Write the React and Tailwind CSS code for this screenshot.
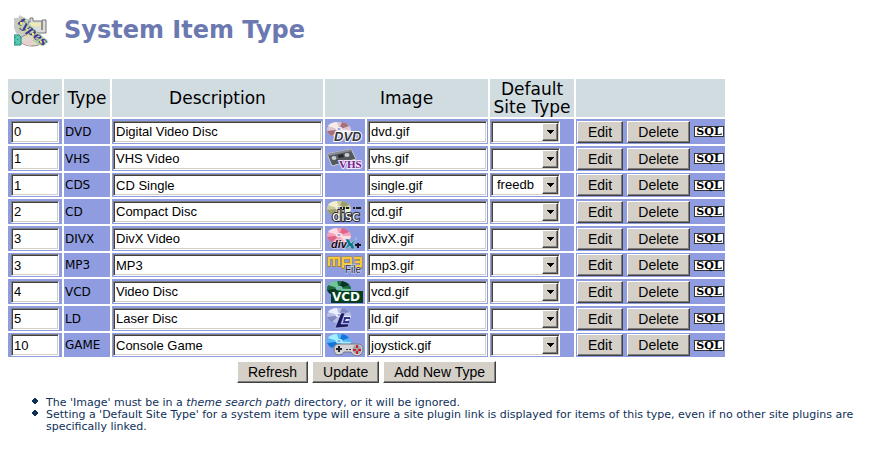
import React, { useState } from 'react';

const siteTypes = ['', 'freedb'];

const initialItems = [
  { order: '0', type: 'DVD', description: 'Digital Video Disc', image: 'dvd.gif', site: '' },
  { order: '1', type: 'VHS', description: 'VHS Video', image: 'vhs.gif', site: '' },
  { order: '1', type: 'CDS', description: 'CD Single', image: 'single.gif', site: 'freedb' },
  { order: '2', type: 'CD', description: 'Compact Disc', image: 'cd.gif', site: '' },
  { order: '3', type: 'DIVX', description: 'DivX Video', image: 'divX.gif', site: '' },
  { order: '3', type: 'MP3', description: 'MP3', image: 'mp3.gif', site: '' },
  { order: '4', type: 'VCD', description: 'Video Disc', image: 'vcd.gif', site: '' },
  { order: '5', type: 'LD', description: 'Laser Disc', image: 'ld.gif', site: '' },
  { order: '10', type: 'GAME', description: 'Console Game', image: 'joystick.gif', site: '' },
];

const Disc = ({ base, dark, light }) => (
  <g>
    <ellipse cx="13" cy="7.5" rx="12" ry="7.5" fill={base} />
    <path d="M13 7.5 L2 4 Q5 0 11 0 Z" fill={light} />
    <path d="M13 7.5 L16 0 Q21 1 23 4 Z" fill={dark} />
    <path d="M13 7.5 L1 9 Q2 12 6 14 Z" fill={dark} />
    <path d="M13 7.5 L25 8 Q24 12 19 14 Z" fill={light} />
    <ellipse cx="13" cy="7" rx="3.5" ry="2.2" fill={light} />
    <ellipse cx="13" cy="7" rx="1.5" ry="1" fill="#8f9de0" />
  </g>
);

const icons = {
  DVD: (
    <>
      <g transform="translate(0 1)">
        <Disc base="#d9c6d2" dark="#a5707a" light="#f6ecec" />
      </g>
      <text x="8" y="20" fontFamily="Liberation Sans" fontSize="13" fontWeight="bold" fontStyle="italic" fill="#34343c" stroke="#fff" strokeWidth="2" paintOrder="stroke">DVD</text>
    </>
  ),
  VHS: (
    <>
      <path d="M1 6 L25 1 L30 11 L6 18 Z" fill="#55585c" stroke="#c9ccd4" strokeWidth="1" />
      <path d="M1 6 L25 1 L26 3 L2 8 Z" fill="#898c92" />
      <ellipse cx="8" cy="10" rx="2.5" ry="2" fill="#c8cbd0" />
      <ellipse cx="21" cy="7" rx="2.5" ry="2" fill="#c8cbd0" />
      <path d="M12 7 L17 6 L18 9 L13 10 Z" fill="#25262a" />
      <text x="13" y="20" fontFamily="Liberation Serif" fontSize="11" fontWeight="bold" fill="#76228a" stroke="#f0e6fa" strokeWidth="2" paintOrder="stroke">VHS</text>
    </>
  ),
  CD: (
    <>
      <Disc base="#c9cb9f" dark="#9a9c6c" light="#f0f0d0" />
      <path d="M14 6h2v2h-2zM17 6h2v2h-2zM20 6h3v2h-3zM27 6h2v2h-2zM30 6h5v2h-5z" fill="#1d1d1d" />
      <text x="6" y="20" fontFamily="DejaVu Sans" fontSize="14" fill="#fff" stroke="#222" strokeWidth="2" paintOrder="stroke">disc</text>
    </>
  ),
  DIVX: (
    <>
      <Disc base="#f0a2b8" dark="#de6488" light="#ffdbe4" />
      <text x="5" y="20" fontFamily="Liberation Sans" fontSize="11" fontWeight="bold" fontStyle="italic" fill="#130d18" stroke="#f8dce4" strokeWidth="1" paintOrder="stroke">div</text>
      <path d="M19 11 L23 11 L25 15 L31 10 L27 16 L29 21 L25 21 L24 18 L18 22 L22 16 Z" fill="#11788c" stroke="#d4eef4" strokeWidth="0.5" />
      <path d="M31 15h2v1h2v2h-2v2h-2v-2h-2v-2h2z" fill="#14141c" />
    </>
  ),
  MP3: (
    <>
      <path d="M3 13V4h10v9M8 4v9M17 15V4h8v6h-8M28 4h7v9h-7M29 8h6" fill="none" stroke="#a9811c" strokeWidth="3" />
      <path d="M3 12V4h10v8M8 4v8M17 14V4h8v6h-8M28 4h7v8h-7M29 8h6" fill="none" stroke="#f7c936" strokeWidth="2" />
      <text x="19" y="19" fontFamily="Liberation Sans" fontSize="10" fill="#282836" stroke="#d8daf0" strokeWidth="1" paintOrder="stroke">File</text>
    </>
  ),
  VCD: (
    <>
      <Disc base="#1b6a42" dark="#0a3523" light="#72c49c" />
      <rect x="5" y="10" width="32" height="12" fill="#063c20" />
      <text x="6" y="20" fontFamily="DejaVu Sans" fontSize="12" fontWeight="bold" fill="#f2fff6">VCD</text>
    </>
  ),
  LD: (
    <>
      <Disc base="#b7bfe4" dark="#8188c0" light="#edf0ff" />
      <path d="M15 5 L19 5 L15 16 L23 16 L22 19 L9 20 Z" fill="#181a62" stroke="#e0e4fa" strokeWidth="0.5" />
      <path d="M18 9h6v2h-4l-1 2h4v2h-6z" fill="#30338a" />
    </>
  ),
  GAME: (
    <>
      <Disc base="#54b8f8" dark="#1673d8" light="#a4f0ff" />
      <path d="M13 10 Q8 10 8 15 Q8 21 13 21 Q17 21 18 18 L25 18 Q27 22 31 22 Q37 21 37 15 Q37 10 31 10 Z" fill="#d4d4d6" stroke="#727482" strokeWidth="1" />
      <path d="M12 12h2v2h2v2h-2v2h-2v-2h-2v-2h2z" fill="#23232b" />
      <path d="M20 15h2v1h-2zM23 15h2v1h-2z" fill="#333" />
      <circle cx="31" cy="15.5" r="4.5" fill="#a3a3ac" />
      <path d="M30 11h2v3h-2zM30 17h2v3h-2zM27 15h3v2h-3zM32 15h3v2h-3z" fill="#cf1f2c" />
    </>
  ),
};

const TypeIcon = ({ type }) => {
  if (!icons[type]) return null;
  return (
    <svg className="block mx-auto" width="38" height="22" viewBox="0 0 38 22" role="img" aria-label={type}>
      {icons[type]}
    </svg>
  );
};

const TitleIcon = () => (
  <svg width="36" height="38" viewBox="0 0 36 38" aria-hidden="true">
    <path d="M0 4h4l2-3 6 4 3 0v3h4v10l-5 2 3 8-6 3-9-12-2-5z" fill="#c9c9c9" />
    <path d="M14 8h2V4h3v3h9V6h4v13H17z" fill="#dcdcda" stroke="#777" />
    <path d="M17 9h11v3H17z" fill="#f0ecb0" />
    <path d="M27 7h2v9h-2z" fill="#8f8f8f" />
    <ellipse cx="18" cy="26" rx="12" ry="6" fill="#e0d8cc" stroke="#8d8680" />
    <path d="M18 26 L8 29 Q12 32 17 32 Z" fill="#e9cdd0" />
    <path d="M18 26 L25 31 Q29 29 30 26 Z" fill="#b5c9a5" />
    <path d="M0 21h5l2 2v8H0z" fill="#55c8ad" stroke="#268a80" />
    <path d="M1 23h1v1H1zM3 25h1v1H3zM1 28h1v1H1z" fill="#2675ac" />
    <text x="3" y="9" transform="rotate(42 3 9)" fontFamily="DejaVu Serif" fontSize="12" fontStyle="italic" fontWeight="bold" fill="#4b319c" stroke="#b9dc9b" strokeWidth="2" paintOrder="stroke">types</text>
    <path d="M6 8h2v2H6zM12 15h2v1h-2zM18 19h2v2h-2zM26 27h2v1h-2z" fill="#f1e86a" />
  </svg>
);

const sunken =
  'block h-[22px] rounded-none border border-t-[#808080] border-l-[#808080] border-b-white border-r-white bg-white text-black shadow-[inset_1px_1px_0_#404040,inset_-1px_-1px_0_#d4d0c8] outline-none';

const TextField = ({ label, value, onChange, className }) => (
  <input
    type="text"
    aria-label={label}
    value={value}
    onChange={(e) => onChange(e.target.value)}
    className={`${sunken} px-[2px] font-['Liberation_Sans'] text-[13px] ${className}`}
  />
);

const Button = ({ children }) => (
  <button
    type="button"
    className="h-[22px] px-[10px] whitespace-nowrap border border-t-white border-l-white border-b-[#404040] border-r-[#404040] bg-[#d4d0c8] font-['Liberation_Sans'] text-[14px] leading-[18px] text-black shadow-[inset_-1px_-1px_0_#808080]"
  >
    {children}
  </button>
);

const SiteSelect = ({ label, value, onChange }) => (
  <div className="relative w-[69px]">
    <select
      aria-label={label}
      value={value}
      onChange={(e) => onChange(e.target.value)}
      className={`${sunken} w-full appearance-none pl-[5px] pr-[18px] font-['Liberation_Sans'] text-[13px]`}
    >
      {siteTypes.map((site) => (
        <option key={site} value={site}>{site}</option>
      ))}
    </select>
    <span className="pointer-events-none absolute top-[2px] right-[2px] bottom-[2px] flex w-4 items-center justify-center border border-t-white border-l-white border-b-[#404040] border-r-[#404040] bg-[#d4d0c8] shadow-[inset_-1px_-1px_0_#808080]">
      <svg width="7" height="4" viewBox="0 0 7 4" shapeRendering="crispEdges" aria-hidden="true">
        <path d="M0 0h7v1H6v1H5v1H4v1H3V3H2V2H1V1H0z" fill="#000" />
      </svg>
    </span>
  </div>
);

const Note = ({ children }) => (
  <li className="flex items-start gap-2">
    <svg className="mt-px shrink-0" width="6" height="6" viewBox="0 0 6 6" shapeRendering="crispEdges" aria-hidden="true">
      <path d="M2 0h2v1h1v1h1v2H5v1H4v1H2V5H1V4H0V2h1V1h1z" fill="#0f3059" />
    </svg>
    <span>{children}</span>
  </li>
);

const App = () => {
  const [items, setItems] = useState(initialItems);

  const updateItem = (index, field, value) => {
    setItems(items.map((item, i) => (i === index ? { ...item, [field]: value } : item)));
  };

  return (
    <main className="min-h-screen bg-white px-[6px] pt-[14px] font-['DejaVu_Sans',sans-serif] text-black">
      {/* Page title */}
      <header className="flex items-start gap-[14px] pl-2">
        <TitleIcon />
        <h1 className="text-[24px] leading-8 font-bold text-[#6b79b0]">System Item Type</h1>
      </header>

      {/* Item type table */}
      <table className="mt-[25px] w-[721px] table-fixed border-separate border-spacing-[2px]">
        <colgroup>
          <col className="w-[54px]" />
          <col className="w-[46px]" />
          <col />
          <col className="w-[40px]" />
          <col className="w-[121px]" />
          <col className="w-[84px]" />
          <col className="w-[149px]" />
        </colgroup>
        <thead>
          <tr className="h-[38px] text-[17px] leading-[18px] [&>*]:bg-[#d1dce0] [&>*]:p-0 [&>*]:font-normal">
            <th>Order</th>
            <th>Type</th>
            <th>Description</th>
            <th colSpan={2}>Image</th>
            <th>Default Site Type</th>
            <td></td>
          </tr>
        </thead>
        <tbody>
          {items.map((item, index) => (
            <tr key={item.type} className="h-[25px] nth-[3n]:h-[24px] [&>td]:bg-[#8f9de0] [&>td]:p-px">
              <td>
                <TextField label={`${item.type} order`} value={item.order} onChange={(v) => updateItem(index, 'order', v)} className="mx-auto w-12" />
              </td>
              <td className="text-[12px] leading-4">{item.type}</td>
              <td>
                <TextField label={`${item.type} description`} value={item.description} onChange={(v) => updateItem(index, 'description', v)} className="w-full" />
              </td>
              <td>
                <TypeIcon type={item.type} />
              </td>
              <td>
                <TextField label={`${item.type} image`} value={item.image} onChange={(v) => updateItem(index, 'image', v)} className="w-full" />
              </td>
              <td>
                <SiteSelect label={`${item.type} default site type`} value={item.site} onChange={(v) => updateItem(index, 'site', v)} />
              </td>
              <td>
                <div className="flex items-center justify-between">
                  <Button>Edit</Button>
                  <Button>Delete</Button>
                  <a href="#sql" className="flex h-[11px] w-[30px] items-center justify-center border border-[#333] bg-white font-['DejaVu_Serif'] text-[11px] leading-[9px] font-bold text-black">
                    SQL
                  </a>
                </div>
              </td>
            </tr>
          ))}
        </tbody>
        <tfoot>
          <tr>
            <td colSpan={7} className="p-0.5">
              <div className="flex justify-center gap-1">
                <Button>Refresh</Button>
                <Button>Update</Button>
                <Button>Add New Type</Button>
              </div>
            </td>
          </tr>
        </tfoot>
      </table>

      {/* Help notes */}
      <ul className="mt-[10px] pr-2 pl-[26px] text-[11px] leading-3 text-[#0f3059]">
        <Note>
          The 'Image' must be in a <i>theme search path</i> directory, or it will be ignored.
        </Note>
        <Note>
          Setting a 'Default Site Type' for a system item type will ensure a site plugin link is displayed for items of this type, even if no other site plugins are specifically linked.
        </Note>
      </ul>
    </main>
  );
};

export default App;
